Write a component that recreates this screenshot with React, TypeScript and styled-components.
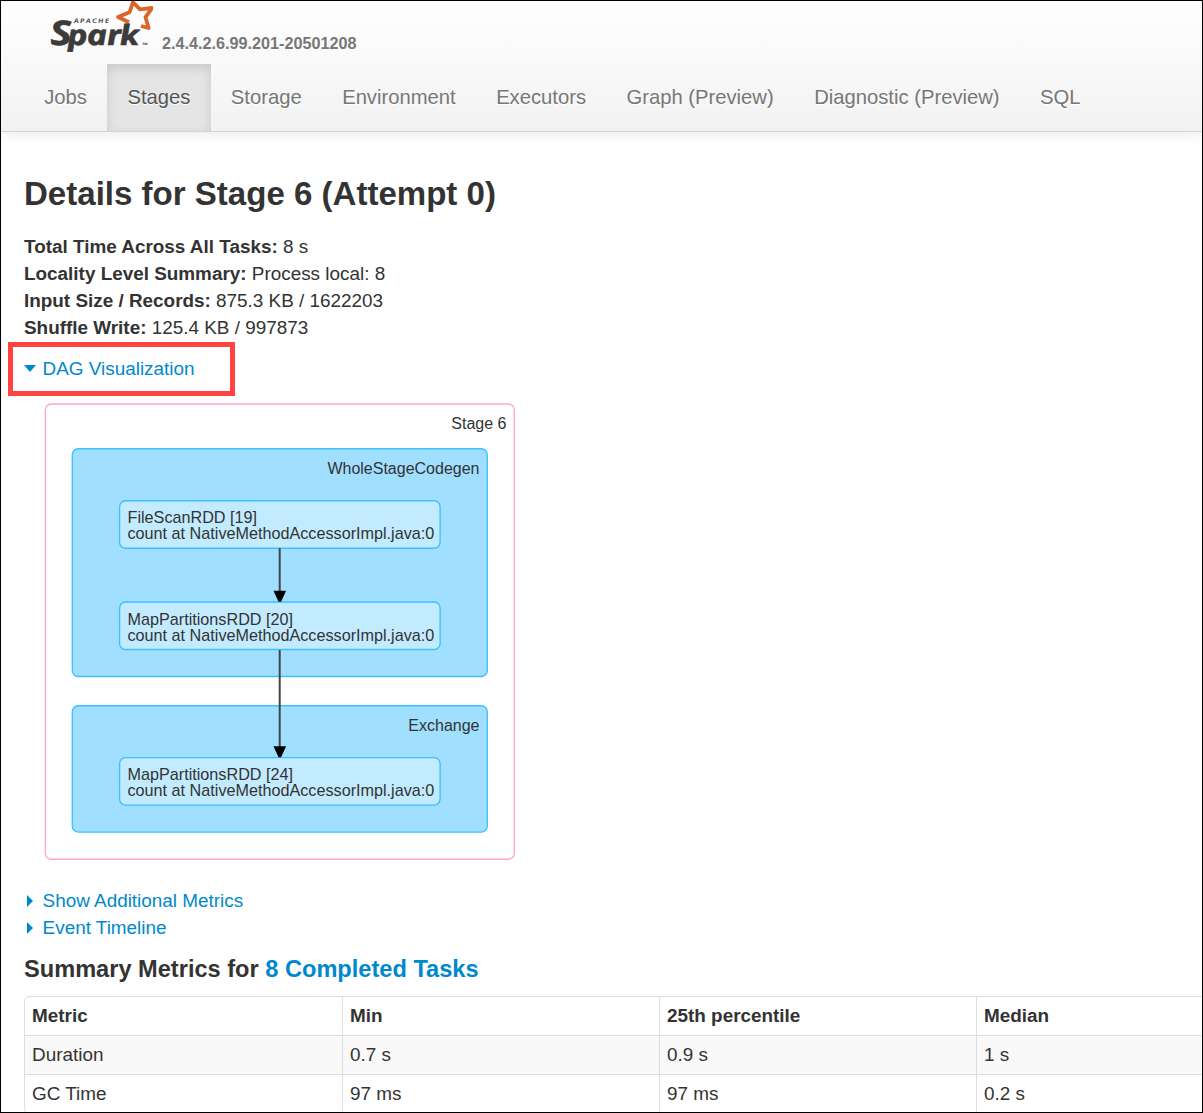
import React from "react";
import styled, { createGlobalStyle, css } from "styled-components";

const GlobalStyle = createGlobalStyle`
  * { box-sizing: border-box; }
  body {
    margin: 0;
    background: #fff;
    color: #333;
    font-family: "Liberation Sans", Arial, Helvetica, sans-serif;
  }
`;

const Page = styled.div`
  width: 1203px;
  height: 1113px;
  border: 1px solid #000;
  overflow: hidden;
  font-size: 18.9px;
  line-height: 27px;
  background: #fff;
`;

const Navbar = styled.header`
  height: 131px;
  border-bottom: 1px solid #d4d4d4;
  background: linear-gradient(#fff, #f2f2f2);
  box-shadow: 0 1px 13px rgba(0, 0, 0, 0.1);
  padding-left: 23px;
`;

const Brand = styled.div`
  display: flex;
  height: 63px;
  padding-left: 25px;
`;

const Version = styled.span`
  margin: 29px 0 0 9px;
  font-size: 16.2px;
  font-weight: bold;
  color: #777;
`;

const Nav = styled.nav`
  display: flex;
  height: 67px;
`;

const NavLink = styled.a<{ $active?: boolean }>`
  padding: 20px 20.24px;
  font-size: 20.23px;
  color: #777;
  text-shadow: 0 1px 0 #fff;
  white-space: nowrap;
  ${(p) =>
    p.$active &&
    css`
      color: #555;
      background: #e5e5e5;
      box-shadow: inset 0 4px 11px rgba(0, 0, 0, 0.125);
    `}
`;

const Content = styled.main`
  padding: 35px 0 0 23px;
`;

const Title = styled.h3`
  margin: 0 0 12px;
  font-size: 33.05px;
  line-height: 54px;
`;

const Facts = styled.ul`
  list-style: none;
  margin: 0;
  padding: 0;
`;

const Highlight = styled.div`
  width: 227px;
  height: 54px;
  margin: 1px 0 0 -16px;
  padding: 8px 11px;
  border: 5px solid #ff4343;
`;

const Toggle = styled.a`
  display: flex;
  align-items: center;
  color: #0088cc;
`;

const Arrow = styled.span<{ $open?: boolean }>`
  width: 18.6px;
  &::before {
    content: "";
    display: block;
    width: 0;
    ${(p) =>
      p.$open
        ? css`
            border: 6.5px solid transparent;
            border-top: 7px solid #0088cc;
            border-bottom: 0;
          `
        : css`
            margin-left: 3px;
            border: 6.5px solid transparent;
            border-left: 6.5px solid #0088cc;
            border-right: 0;
          `}
  }
`;

const Dag = styled.svg`
  display: block;
  margin: 6px 0 0 20px;
  font-size: 16.2px;
  fill: #333;
`;

const ClusterLabel = styled.text`
  font-size: 16px;
  text-anchor: end;
`;

const LogoText = styled.text`
  font-family: "Open Sans", sans-serif;
  font-weight: 700;
  font-style: italic;
  font-size: 28px;
  fill: #3c3a3a;
`;

const Toggles = styled.div`
  margin-top: 26px;
`;

const Subtitle = styled.h4`
  margin: 15px 0 13px;
  font-size: 23.6px;
  line-height: 27px;
  color: #333;
  a { color: #0088cc; }
`;

const Table = styled.div`
  width: 1588px;
  border: 1px solid #ddd;
  border-radius: 5px;
`;

const Row = styled.div<{ $head?: boolean; $striped?: boolean }>`
  display: grid;
  grid-template-columns: 317px 317px 317px 317px 1fr;
  height: ${(p) => (p.$head ? 38 : 39)}px;
  border-top: ${(p) => (p.$head ? "0" : "1px solid #ddd")};
  background: ${(p) => (p.$striped ? "#f9f9f9" : "transparent")};
  font-weight: ${(p) => (p.$head ? "bold" : "normal")};
`;

const Cell = styled.div`
  padding: 5px 7px;
  & + & { border-left: 1px solid #ddd; }
`;

const tabs = ["Jobs", "Stages", "Storage", "Environment", "Executors", "Graph (Preview)", "Diagnostic (Preview)", "SQL"];

const facts = [
  ["Total Time Across All Tasks:", "8 s"],
  ["Locality Level Summary:", "Process local: 8"],
  ["Input Size / Records:", "875.3 KB / 1622203"],
  ["Shuffle Write:", "125.4 KB / 997873"],
];

const clusters = [
  { name: "WholeStageCodegen", y: 448.7, h: 227.8 },
  { name: "Exchange", y: 705.7, h: 126.4 },
];

const nodes = [
  { name: "FileScanRDD [19]", y: 500.7, baseline: 523 },
  { name: "MapPartitionsRDD [20]", y: 602, baseline: 625 },
  { name: "MapPartitionsRDD [24]", y: 757.6, baseline: 780 },
];

const edges = [
  [548, 602],
  [650, 757.5],
];

const columns = ["Metric", "Min", "25th percentile", "Median"];

const rows = [
  ["Duration", "0.7 s", "0.9 s", "1 s"],
  ["GC Time", "97 ms", "97 ms", "0.2 s"],
];

function SparkLogo() {
  return (
    <svg width="104" height="54" viewBox="49 1 104 54">
      <path
        d="M141 26L148.7 28L145.5 17.2L152 8L140 9.3L133 2.2L129.5 12.3L118 17L129 22.3"
        fill="none"
        stroke="#dd6428"
        strokeWidth="3.8"
        strokeLinejoin="round"
      />
      <LogoText transform="translate(52 45) scale(1.22 1) skewX(4)">
        <tspan x="19.5" y="-22" fontSize="6.3" letterSpacing="1.1" fill="#555">APACHE</tspan>
        <tspan x="-1" y="0" fontSize="34" stroke="#3c3a3a" strokeWidth="0.6">S</tspan>
        <tspan x="13.2 29 45.5 56" y="0" stroke="#3c3a3a" strokeWidth="0.6">park</tspan>
        <tspan x="74" y="0" fontSize="3.2">TM</tspan>
      </LogoText>
    </svg>
  );
}

function StageGraph() {
  return (
    <Dag width="472" height="459" viewBox="44 402 472 459">
      <rect x="45.3" y="404" width="469" height="455.2" rx="6" fill="#fff" stroke="#ffa9b9" strokeWidth="1.35" />
      <ClusterLabel x="506.5" y="429">Stage 6</ClusterLabel>
      {clusters.map((c) => (
        <g key={c.name}>
          <rect x="72.3" y={c.y} width="415" height={c.h} rx="6" fill="#a0dfff" stroke="#3ec0ff" strokeWidth="1.35" />
          <ClusterLabel x="479.5" y={c.y + 25.3}>{c.name}</ClusterLabel>
        </g>
      ))}
      {nodes.map((n) => (
        <g key={n.name}>
          <rect x="119.6" y={n.y} width="320.5" height="47.5" rx="6" fill="#c3ebff" stroke="#3ec0ff" strokeWidth="1.35" />
          <text x="127.5" y={n.baseline}>{n.name}</text>
          <text x="127.5" y={n.baseline + 16}>count at NativeMethodAccessorImpl.java:0</text>
        </g>
      ))}
      {edges.map(([from, to]) => (
        <g key={from}>
          <path d={`M279.7 ${from}V${to - 9}`} stroke="#444" strokeWidth="2" />
          <path d={`M273.5 ${to - 11.3}h12.6l-5 11h-2.6z`} fill="#000" />
        </g>
      ))}
    </Dag>
  );
}

export default function App() {
  return (
    <>
      <GlobalStyle />
      <Page>
        <Navbar>
          <Brand>
            <SparkLogo />
            <Version>2.4.4.2.6.99.201-20501208</Version>
          </Brand>
          <Nav>
            {tabs.map((t) => (
              <NavLink key={t} $active={t === "Stages"}>{t}</NavLink>
            ))}
          </Nav>
        </Navbar>
        <Content>
          <Title>Details for Stage 6 (Attempt 0)</Title>
          <Facts>
            {facts.map(([label, value]) => (
              <li key={label}>
                <strong>{label}</strong> {value}
              </li>
            ))}
          </Facts>
          <Highlight>
            <Toggle>
              <Arrow $open />
              DAG Visualization
            </Toggle>
          </Highlight>
          <StageGraph />
          <Toggles>
            <Toggle><Arrow />Show Additional Metrics</Toggle>
            <Toggle><Arrow />Event Timeline</Toggle>
          </Toggles>
          <Subtitle>
            Summary Metrics for <a>8 Completed Tasks</a>
          </Subtitle>
          <Table>
            <Row $head>
              {columns.map((h) => (
                <Cell key={h}>{h}</Cell>
              ))}
            </Row>
            {rows.map((r, i) => (
              <Row key={r[0]} $striped={i % 2 === 0}>
                {r.map((v, j) => (
                  <Cell key={j}>{v}</Cell>
                ))}
              </Row>
            ))}
          </Table>
        </Content>
      </Page>
    </>
  );
}
